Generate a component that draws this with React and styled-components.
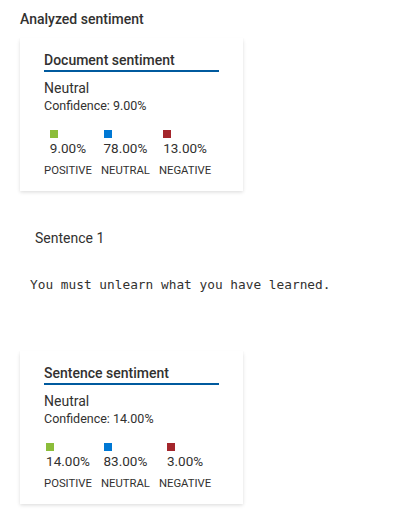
import React from "react";
import styled, { createGlobalStyle } from "styled-components";

const GlobalStyle = createGlobalStyle`
  html, body { margin: 0; padding: 0; background: #ffffff; }
  body {
    font-family: Roboto, "Open Sans", sans-serif;
    color: #323130;
    -webkit-font-smoothing: antialiased;
  }
`;

const Page = styled.div`
  display: flex;
  flex-direction: column;
  align-items: flex-start;
  padding: 9px 20px 8px 20px;
`;

const Title = styled.h2`
  margin: 0;
  font-size: 14px;
  line-height: 20px;
  font-weight: 500;
  color: #323130;
`;

const Card = styled.div`
  box-sizing: border-box;
  width: 223px;
  margin-top: ${(p) => p.$top || 0}px;
  padding: 12px 24px 12px 24px;
  background: #fff;
  box-shadow: 0 1.6px 3.6px rgba(0, 0, 0, 0.132), 0 0.3px 0.9px rgba(0, 0, 0, 0.108);
`;

const CardHeader = styled.div`
  font-size: 14px;
  line-height: 20px;
  font-weight: 500;
  color: #323130;
  border-bottom: 2px solid #005a9e;
`;

const Label = styled.div`
  margin-top: 6px;
  font-size: 14px;
  line-height: 20px;
  color: #323130;
`;

const Confidence = styled.div`
  font-size: 12.5px;
  line-height: 16px;
  color: #323130;
`;

const Scores = styled.div`
  display: flex;
  gap: 9px;
  margin-top: 16px;
`;

const Column = styled.div`
  display: flex;
  flex-direction: column;
  align-items: center;
`;

const ValueBlock = styled.div`
  display: flex;
  flex-direction: column;
  align-items: flex-start;
`;

const Swatch = styled.span`
  display: block;
  width: 8px;
  height: 8px;
  background: ${(p) => p.$color};
`;

const Percent = styled.div`
  font-size: 13.5px;
  line-height: 20px;
  color: #323130;
`;

const ScoreName = styled.div`
  margin-top: 5px;
  font-size: 11.3px;
  line-height: 16px;
  color: #323130;
  text-transform: uppercase;
`;

const SentenceLabel = styled.div`
  margin: 37px 0 0 15px;
  font-size: 14px;
  line-height: 20px;
  color: #323130;
`;

const SentenceText = styled.pre`
  margin: 27px 0 0 10px;
  font-family: "DejaVu Sans Mono", "Liberation Mono", monospace;
  font-size: 12.8px;
  line-height: 20px;
  color: #323130;
`;

const COLORS = { positive: "#8cbd3a", neutral: "#0078d4", negative: "#a4262c" };

function SentimentCard({ title, sentiment, confidence, scores, top }) {
  return (
    <Card $top={top}>
      <CardHeader>{title}</CardHeader>
      <Label>{sentiment}</Label>
      <Confidence>Confidence: {confidence}</Confidence>
      <Scores>
        {scores.map((s) => (
          <Column key={s.name}>
            <ValueBlock>
              <Swatch $color={COLORS[s.name]} />
              <Percent>{s.value}</Percent>
            </ValueBlock>
            <ScoreName>{s.name}</ScoreName>
          </Column>
        ))}
      </Scores>
    </Card>
  );
}

export default function App() {
  return (
    <>
      <GlobalStyle />
      <Page>
        <Title>Analyzed sentiment</Title>
        <SentimentCard
          top={9}
          title="Document sentiment"
          sentiment="Neutral"
          confidence="9.00%"
          scores={[
            { name: "positive", value: "9.00%" },
            { name: "neutral", value: "78.00%" },
            { name: "negative", value: "13.00%" },
          ]}
        />
        <SentenceLabel>Sentence 1</SentenceLabel>
        <SentenceText>You must unlearn what you have learned.</SentenceText>
        <SentimentCard
          top={56}
          title="Sentence sentiment"
          sentiment="Neutral"
          confidence="14.00%"
          scores={[
            { name: "positive", value: "14.00%" },
            { name: "neutral", value: "83.00%" },
            { name: "negative", value: "3.00%" },
          ]}
        />
      </Page>
    </>
  );
}
